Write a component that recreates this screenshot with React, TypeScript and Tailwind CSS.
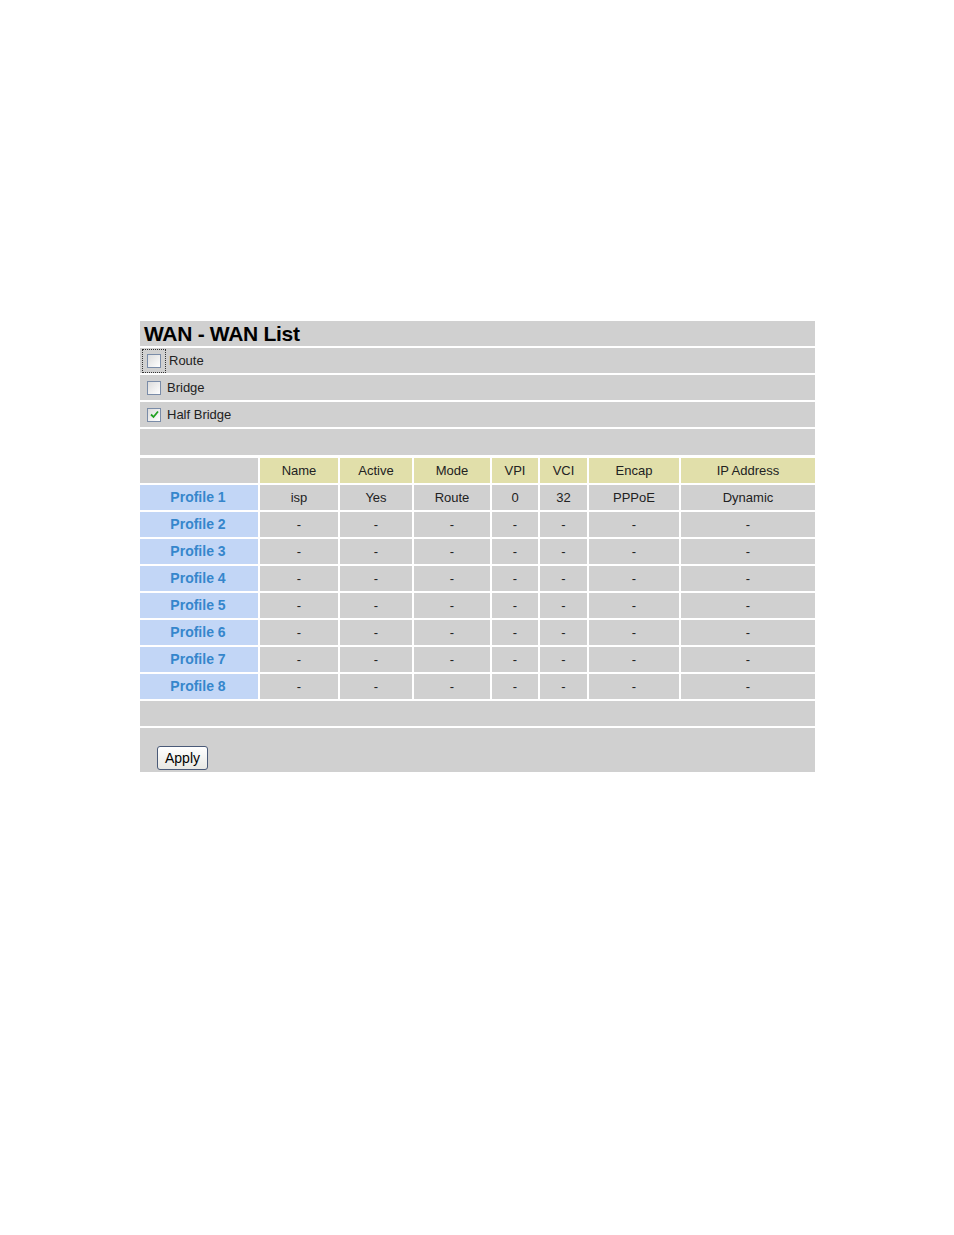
import React from 'react';

const cols = ['Name', 'Active', 'Mode', 'VPI', 'VCI', 'Encap', 'IP Address'];

const rows = [
  ['isp', 'Yes', 'Route', '0', '32', 'PPPoE', 'Dynamic'],
  ...Array.from({ length: 7 }, () => ['-', '-', '-', '-', '-', '-', '-']),
];

const grid = 'grid grid-cols-[118px_78px_72px_76px_46px_47px_90px_134px] gap-x-[2px]';

function Box({ checked, focus }: { checked?: boolean; focus?: boolean }) {
  return (
    <span className={`inline-flex items-center justify-center ${focus ? 'p-[4px] border border-dotted border-[#333]' : ''}`}>
      <span className="w-[14px] h-[14px] border border-[#7a8ca8] bg-gradient-to-br from-[#dcdcdc] to-white flex items-center justify-center">
        {checked && (
          <svg width="9" height="9" viewBox="0 0 9 9">
            <path d="M1 4.5 L3.5 7 L8 1.5" fill="none" stroke="#21a121" strokeWidth="1.8" />
          </svg>
        )}
      </span>
    </span>
  );
}

export default function App() {
  const font = { fontFamily: '"Liberation Sans", Arial, sans-serif' };
  return (
    <main className="min-h-[1235px] bg-white pt-[321px] pl-[140px]" style={font}>
      <div className="w-[675px] flex flex-col gap-y-[2px] text-[13px] text-[#222]">
        {/* Title */}
        <div className="h-[25px] bg-[#d0d0d0] flex items-center px-1">
          <h1 className="text-[21px] font-bold text-black tracking-[-0.3px]">WAN - WAN List</h1>
        </div>

        {/* Mode options */}
        <div className="h-[25px] bg-[#d0d0d0] flex items-center gap-[3px] pl-[2px]">
          <Box focus />
          <span>Route</span>
        </div>
        <div className="h-[25px] bg-[#d0d0d0] flex items-center gap-[6px] pl-[7px]">
          <Box />
          <span>Bridge</span>
        </div>
        <div className="h-[25px] bg-[#d0d0d0] flex items-center gap-[6px] pl-[7px]">
          <Box checked />
          <span>Half Bridge</span>
        </div>
        <div className="h-[26px] bg-[#d0d0d0] mb-[1px]" />

        {/* Table header */}
        <div className={grid}>
          <div className="h-[25px] bg-[#d0d0d0]" />
          {cols.map((c) => (
            <div key={c} className="h-[25px] bg-[#e1dfaa] flex items-center justify-center">
              {c}
            </div>
          ))}
        </div>

        {/* Profiles */}
        {rows.map((r, i) => (
          <div key={i} className={grid}>
            <div className="h-[25px] bg-[#c2d6f6] flex items-center justify-center text-[14px] font-bold text-[#3586cc] pr-[2px]">
              Profile {i + 1}
            </div>
            {r.map((v, j) => (
              <div key={j} className="h-[25px] bg-[#d0d0d0] flex items-center justify-center">
                {v}
              </div>
            ))}
          </div>
        ))}

        <div className="h-[25px] bg-[#d0d0d0]" />
        <div className="h-[44px] bg-[#d0d0d0] flex items-end pb-[2px] pl-[17px]">
          <button className="h-[24px] w-[51px] border border-[#4a5a78] rounded-[3px] bg-gradient-to-b from-white to-[#e8e8e4] text-[14px] text-black">
            Apply
          </button>
        </div>
      </div>
    </main>
  );
}
